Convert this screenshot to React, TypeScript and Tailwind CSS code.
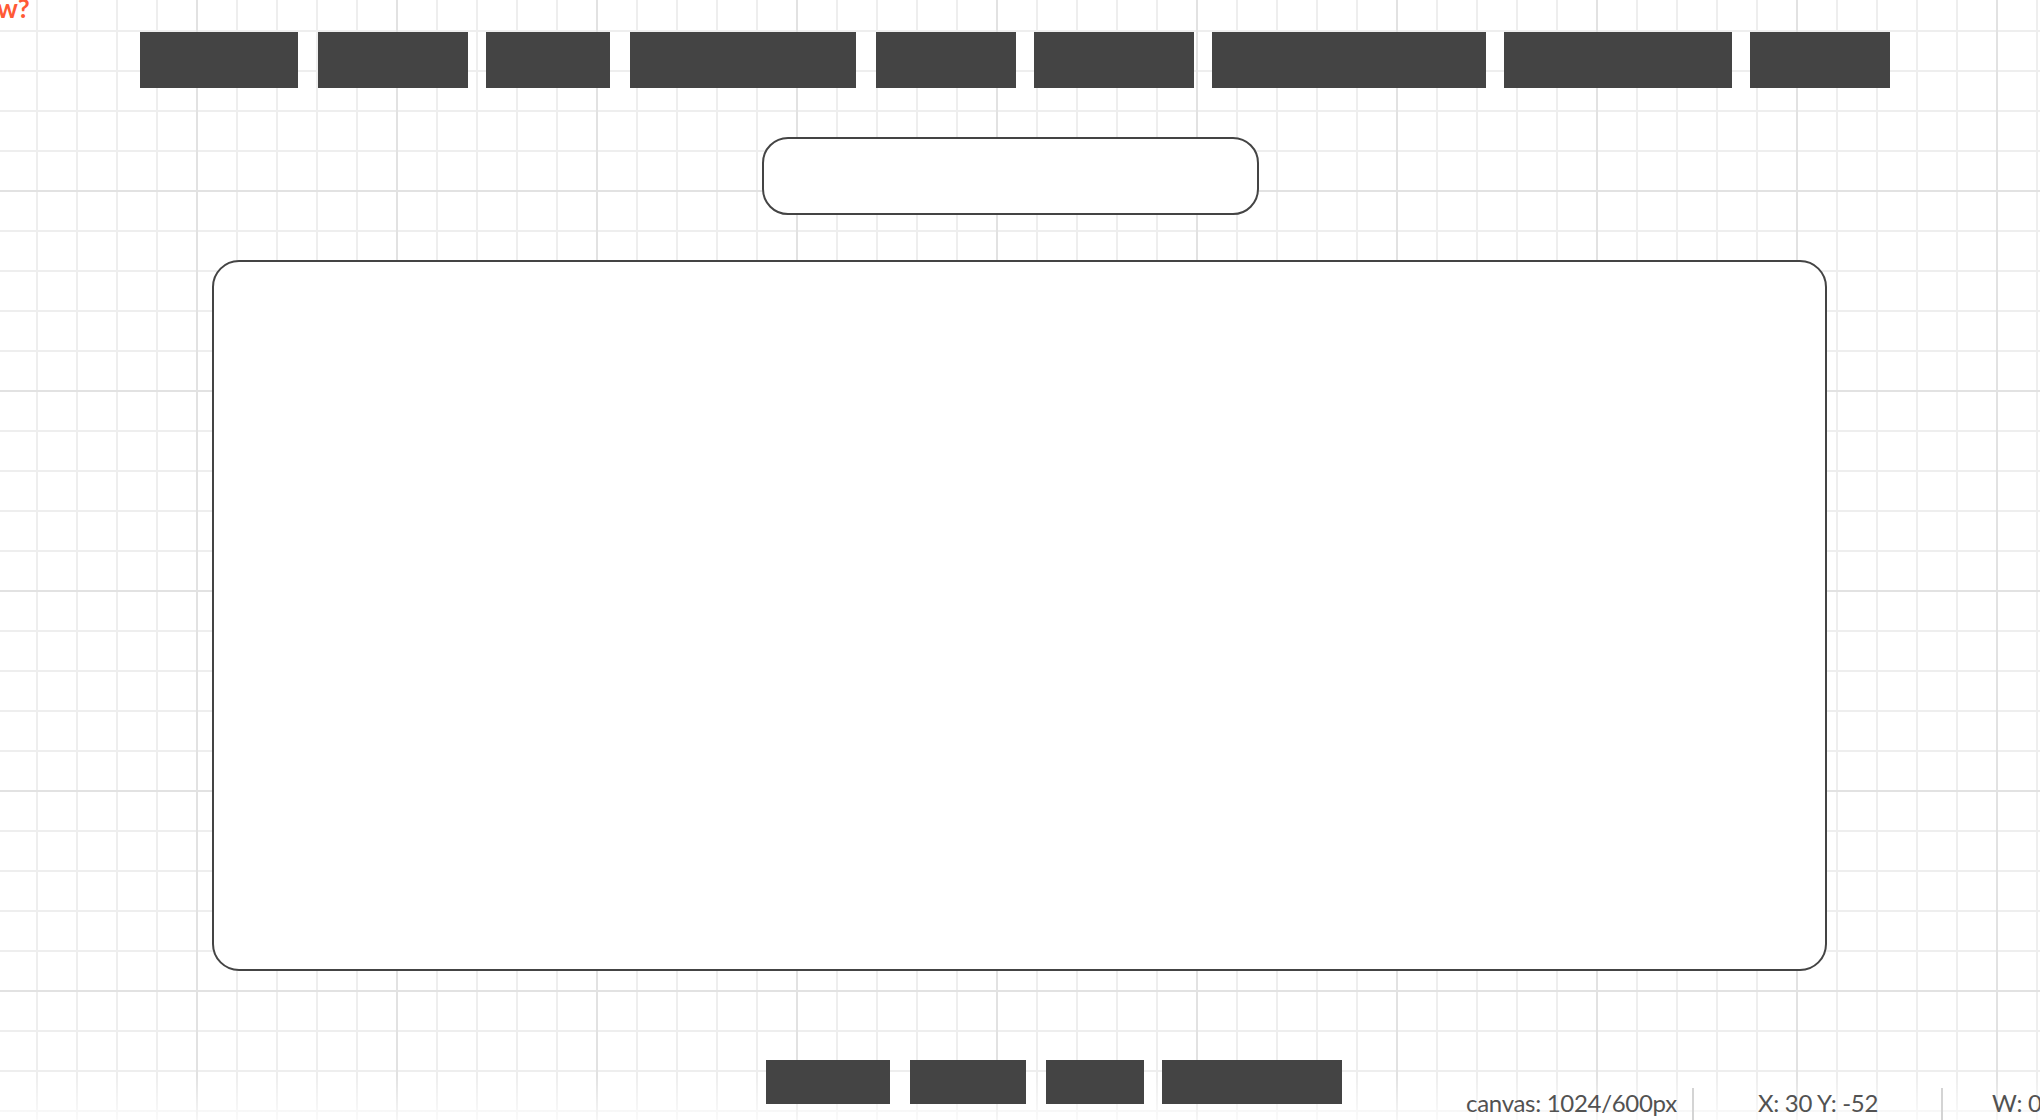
const topButtons = [
  'w-[158px]',
  'ml-[20px] w-[150px]',
  'ml-[18px] w-[124px]',
  'ml-[20px] w-[226px]',
  'ml-[20px] w-[140px]',
  'ml-[18px] w-[160px]',
  'ml-[18px] w-[274px]',
  'ml-[18px] w-[228px]',
  'ml-[18px] w-[140px]',
];

const bottomButtons = ['w-[124px]', 'ml-[20px] w-[116px]', 'ml-[20px] w-[98px]', 'ml-[18px] w-[180px]'];

export default function App() {
  return (
    <div className="relative h-[1120px] w-[2040px] overflow-hidden bg-white bg-[linear-gradient(to_right,#e2e2e2_2px,transparent_2px),linear-gradient(to_bottom,#e2e2e2_2px,transparent_2px),linear-gradient(to_right,#eeeeee_2px,transparent_2px),linear-gradient(to_bottom,#eeeeee_2px,transparent_2px)] bg-[length:200px_200px,200px_200px,40px_40px,40px_40px] bg-[position:196px_190px,196px_190px,36px_30px,36px_30px] font-['Lato','Noto_Sans',sans-serif]">
      {/* clipped hint label */}
      <span className="absolute -left-[3px] -top-[5px] text-[26px] leading-none font-bold text-[#ff5a36]">w?</span>

      {/* toolbar */}
      <div className="flex pt-[32px] pl-[140px]">
        {topButtons.map((cls, i) => (
          <button key={i} className={`h-[56px] bg-[#444444] ${cls}`} />
        ))}
      </div>

      {/* title field */}
      <div className="mt-[49px] ml-[762px] h-[78px] w-[497px] rounded-[26px] border-2 border-[#444444] bg-white" />

      {/* canvas */}
      <div className="mt-[45px] ml-[212px] h-[711px] w-[1615px] rounded-[27px] border-2 border-[#444444] bg-white" />

      {/* actions */}
      <div className="relative z-10 mt-[89px] flex pl-[766px]">
        {bottomButtons.map((cls, i) => (
          <button key={i} className={`h-[44px] bg-[#444444] ${cls}`} />
        ))}
      </div>

      {/* bottom fade */}
      <div className="absolute inset-x-0 bottom-0 h-[44px] bg-gradient-to-b from-white/0 to-white/70" />

      {/* status bar */}
      <div className="absolute bottom-0 left-[1466px] z-20 flex h-[32px] text-[24px] leading-none tracking-[-0.3px] whitespace-nowrap text-[#525252]">
        <div className="border-r-2 border-[#d4d4d4] pt-[3px] pr-[15px]">canvas: 1024/600px</div>
        <div className="border-r-2 border-[#d4d4d4] pt-[3px] pr-[63px] pl-[64px]">X: 30 Y: -52</div>
        <div className="pt-[3px] pl-[49px]">W: 0 H: 0</div>
      </div>
    </div>
  );
}
